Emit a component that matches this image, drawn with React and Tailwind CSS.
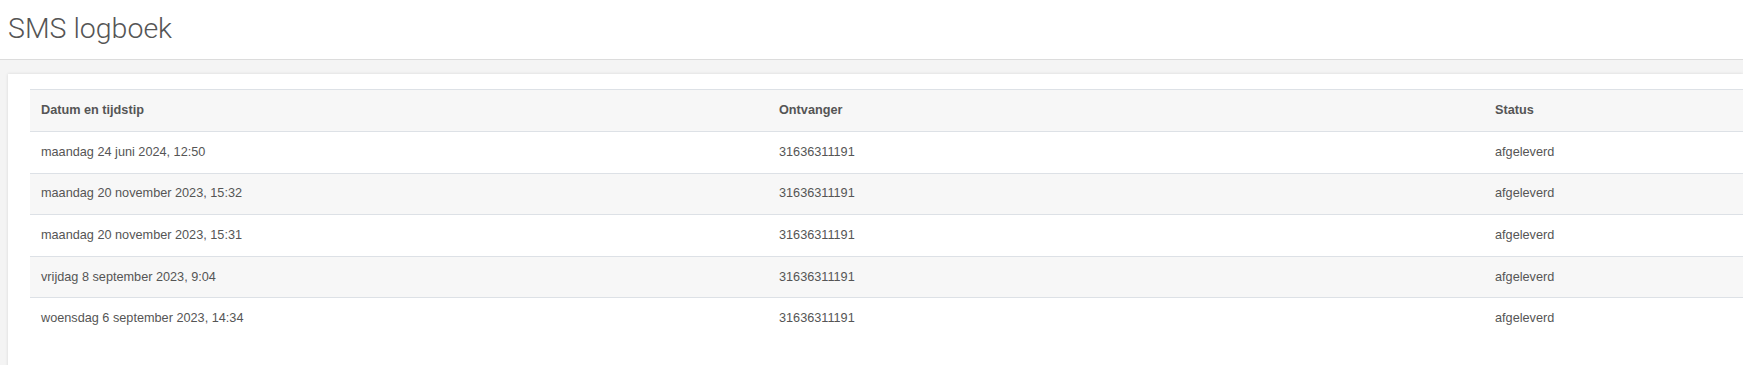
import React from 'react';

const rows = [
  { date: "maandag 24 juni 2024, 12:50", to: "31636311191", status: "afgeleverd" },
  { date: "maandag 20 november 2023, 15:32", to: "31636311191", status: "afgeleverd" },
  { date: "maandag 20 november 2023, 15:31", to: "31636311191", status: "afgeleverd" },
  { date: "vrijdag 8 september 2023, 9:04", to: "31636311191", status: "afgeleverd" },
  { date: "woensdag 6 september 2023, 14:34", to: "31636311191", status: "afgeleverd" },
];

const App = () => {
  return (
    <div className="h-[365px] overflow-hidden bg-[#f4f4f4] font-['Liberation_Sans',Arial,sans-serif] text-[#444]">

      {/* Page title */}
      <div className="h-[60px] bg-white border-b border-[#dcdcdc] flex items-center pl-[8px]">
        <h1 className="font-['Roboto',sans-serif] font-light text-[28.5px] text-[#555]">SMS logboek</h1>
      </div>

      {/* Card */}
      <div className="mt-[14px] ml-[8px] h-[300px] bg-white shadow-[0_0_3px_rgba(0,0,0,0.12)] pt-[15px] pl-[22px]">
        <table className="w-full border-collapse text-[12.7px]">
          <colgroup>
            <col className="w-[738px]" />
            <col className="w-[716px]" />
            <col />
          </colgroup>
          <thead>
            <tr className="bg-[#f7f7f7] border-t border-b border-[#dde1e6]">
              <th className="h-[42px] pl-[11px] text-left font-bold text-[#555]">Datum en tijdstip</th>
              <th className="h-[42px] pl-[11px] text-left font-bold text-[#555]">Ontvanger</th>
              <th className="h-[42px] pl-[11px] text-left font-bold text-[#555]">Status</th>
            </tr>
          </thead>
          <tbody>
            {rows.map((r, i) => (
              <tr key={i} className={`${i % 2 === 1 ? "bg-[#f7f7f7]" : "bg-white"} ${i < rows.length - 1 ? "border-b border-[#dde1e6]" : ""}`}>
                <td className="h-[41.6px] pl-[11px] text-[#555]">{r.date}</td>
                <td className="h-[41.6px] pl-[11px] text-[#555]">{r.to}</td>
                <td className="h-[41.6px] pl-[11px] text-[#555]">{r.status}</td>
              </tr>
            ))}
          </tbody>
        </table>
      </div>
    </div>
  );
};

export default App;
